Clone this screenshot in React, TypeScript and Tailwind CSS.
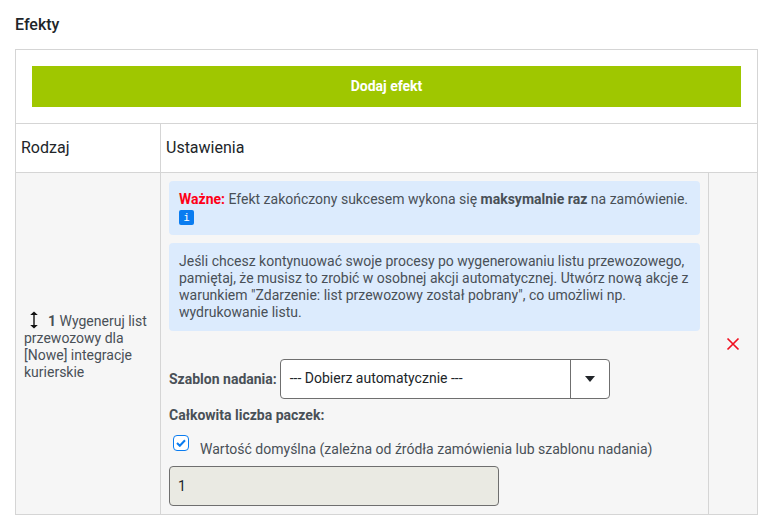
export default function App() {
  return (
    <div className="w-[776px] h-[531px] bg-white overflow-hidden font-['Roboto',sans-serif] text-[14px] leading-[17px] text-[#495057] px-[15px] pt-[16px]">
      <h2 className="text-[16px] leading-[18px] font-medium text-[#212529] mb-[15px]">Efekty</h2>
      <div className="w-[743px] border border-[#d5d5d5]">
        <div className="px-[16px] py-[16px] border-b border-[#d5d5d5] h-[74px]">
          <button className="w-[709px] h-[41px] bg-[#9fc700] text-white font-bold text-[14px]">Dodaj efekt</button>
        </div>
        <div className="flex h-[49px] border-b border-[#d5d5d5] text-[16px] text-[#212529] bg-white">
          <div className="w-[145px] border-r border-[#d5d5d5] px-[5px] pb-[2px] flex items-center">Rodzaj</div>
          <div className="flex-1 px-[5px] pb-[2px] flex items-center">Ustawienia</div>
        </div>
        <div className="flex bg-[#f6f6f6] h-[341px]">
          <div className="w-[145px] border-r border-[#d5d5d5] pl-[8px] pr-[5px] flex items-center">
            <div className="pt-[4px]">
              <svg width="12" height="18" viewBox="0 0 12 18" className="inline-block ml-[4px] mr-[8px] align-[-3px]">
                <path d="M6 2v14" stroke="#111" strokeWidth="1.4" />
                <path d="M2.2 4 6 0.5 9.8 4zM2.2 14 6 17.5 9.8 14z" fill="#111" />
              </svg>
              <b className="font-bold">1</b> Wygeneruj list przewozowy dla [Nowe] integracje kurierskie
            </div>
          </div>
          <div className="w-[548px] border-r border-[#d5d5d5] px-[8px] pt-[8px]">
            <div className="h-[54px] bg-[#dcebfd] rounded-[4px] px-[10px] pt-[10px]">
              <b className="font-bold text-[#ff0018]">Ważne:</b> Efekt zakończony sukcesem wykona się <b className="font-bold">maksymalnie raz</b> na zamówienie.
              <div className="w-[15px] h-[15px] mt-[2px] bg-[#0a7cf0] rounded-[2px] text-white text-[11px] leading-[15px] text-center font-['DejaVu_Sans_Mono',monospace]">i</div>
            </div>
            <div className="h-[88px] mt-[8px] bg-[#dcebfd] rounded-[4px] px-[10px] pt-[10px]">
              Jeśli chcesz kontynuować swoje procesy po wygenerowaniu listu przewozowego, pamiętaj, że musisz to zrobić w osobnej akcji automatycznej. Utwórz nową akcje z warunkiem "Zdarzenie: list przewozowy został pobrany", co umożliwi np. wydrukowanie listu.
            </div>
            <div className="flex items-center mt-[28px] h-[40px]">
              <b className="font-bold mr-[3px] whitespace-nowrap">Szablon nadania:</b>
              <div className="w-[330px] h-[40px] flex bg-white border border-[#6f6f6f] rounded-[4px] text-[#212529]">
                <div className="flex-1 flex items-center pl-[9px] pb-[1px]">--- Dobierz automatycznie ---</div>
                <div className="w-[39px] border-l border-[#6f6f6f] flex items-center justify-center">
                  <div className="w-0 h-0 border-l-[5.5px] border-r-[5.5px] border-t-[6px] border-l-transparent border-r-transparent border-t-[#212529]" />
                </div>
              </div>
            </div>
            <b className="block font-bold mt-[8px]">Całkowita liczba paczek:</b>
            <div className="flex mt-[11px] h-[28px]">
              <div className="w-[16px] h-[16px] ml-[4px] bg-white border border-[#0a7cf0] rounded-[4px] flex items-center justify-center">
                <svg width="10" height="8" viewBox="0 0 10 8"><path d="M1 4l2.8 2.8L9 1.2" fill="none" stroke="#0a7cf0" strokeWidth="2" /></svg>
              </div>
              <span className="ml-[11px] mt-[6px]">Wartość domyślna (zależna od źródła zamówienia lub szablonu nadania)</span>
            </div>
            <div className="w-[330px] h-[40px] mt-[3px] bg-[#eaeae3] border border-[#6f6f6f] rounded-[4px] flex items-center pl-[8px] text-[#212529]">1</div>
          </div>
          <div className="flex-1 flex items-center justify-center">
            <svg width="14" height="14" viewBox="0 0 14 14" className="mt-[1px]"><path d="M1.5 1.5l11 11M12.5 1.5l-11 11" stroke="#f01020" strokeWidth="1.7" /></svg>
          </div>
        </div>
      </div>
    </div>
  );
}
